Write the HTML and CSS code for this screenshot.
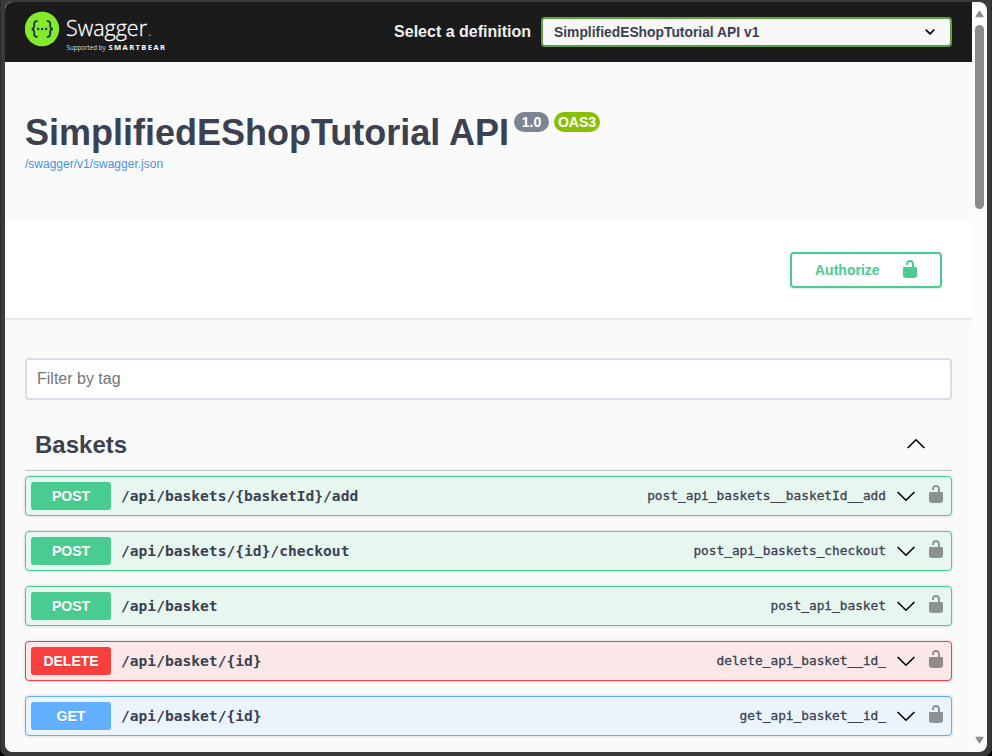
FILE: index.html
```html
<!DOCTYPE html>
<html lang="en">
<head>
<meta charset="utf-8">
<title>Swagger UI</title>
<link rel="stylesheet" href="styles.css">
</head>
<body>
<svg class="defs" width="0" height="0">
  <symbol id="unlocked" viewBox="0 0 20 20"><path d="M15.8 8H14V5.6C14 2.703 12.665 1 10 1 7.334 1 6 2.703 6 5.6V6h2v-.801C8 3.754 8.797 3 10 3c1.203 0 2 .754 2 2.199V8H4c-.553 0-1 .646-1 1.199V17c0 .549.428 1.139.951 1.307l1.197.387C5.672 18.861 6.55 19 7.1 19h5.8c.549 0 1.428-.139 1.951-.307l1.196-.387c.524-.167.953-.757.953-1.306V9.199C17 8.646 16.352 8 15.8 8z"/></symbol>
  <symbol id="chevron" viewBox="0 0 20 20"><path d="M1.6 6 10 14.2 18.400 6" fill="none" stroke="#000" stroke-width="1.6"/></symbol>
</svg>
<div class="frame">
<div class="window">
<main class="page">
  <header class="topbar">
    <svg class="logo" width="150" height="50" viewBox="0 0 150 50">
      <circle cx="17" cy="22" r="17.2" fill="#85ea2d"/>
      <g fill="none" stroke="#173647" stroke-width="1.8">
        <path d="M12.6 14.2h-.9c-1.9 0-2.5 1-2.5 2.700v2c0 2-.7 2.900-2.500 3.100 1.800.2 2.500 1.100 2.500 3.100v2c0 1.700.6 2.700 2.500 2.700h.9M21.800 14.200h.9c1.900 0 2.500 1 2.500 2.700v2c0 2 .7 2.900 2.500 3.100-1.800.2-2.500 1.100-2.500 3.100v2c0 1.700-.6 2.700-2.500 2.700h-.9"/>
      </g>
      <g fill="#173647"><circle cx="13.200" cy="22" r="1.200"/><circle cx="17.200" cy="22" r="1.200"/><circle cx="21.200" cy="22" r="1.200"/></g>
      <text class="logo-name" x="41" y="29" textLength="81" lengthAdjust="spacingAndGlyphs">Swagger</text>
      <path d="M123.500 28.300h2.500" stroke="#999" stroke-width="1"/>
      <text class="logo-by" x="41.500" y="43" textLength="39" lengthAdjust="spacingAndGlyphs">Supported by</text>
      <text class="logo-brand" x="83.500" y="43" textLength="56.500">SMARTBEAR</text>
    </svg>
    <span class="select-label">Select a definition</span>
    <div class="select"><span>SimplifiedEShopTutorial API v1</span>
      <svg width="10" height="6" viewBox="0 0 10 6"><path d="M.7.700 5 4.800 9.300.700" fill="none" stroke="#000" stroke-width="1.700"/></svg>
    </div>
  </header>
  <section class="info">
    <div class="title-row"><h1>SimplifiedEShopTutorial API</h1><span class="badge version">1.0</span><span class="badge oas">OAS3</span></div>
    <a class="link">/swagger/v1/swagger.json</a>
  </section>
  <section class="schemes">
    <button class="authorize"><span>Authorize</span><svg width="20" height="20"><use href="#unlocked"/></svg></button>
  </section>
  <section class="content">
    <div class="filter">Filter by tag</div>
    <div class="tag"><h2>Baskets</h2><svg class="flip" width="20" height="20"><use href="#chevron"/></svg></div>
    <div class="op post"><span class="method">POST</span><span class="path">/api/baskets/{basketId}/add</span><span class="opid">post_api_baskets__basketId__add</span><svg class="arrow" width="20" height="20"><use href="#chevron"/></svg><svg class="lock" width="20" height="20"><use href="#unlocked"/></svg></div>
    <div class="op post"><span class="method">POST</span><span class="path">/api/baskets/{id}/checkout</span><span class="opid">post_api_baskets_checkout</span><svg class="arrow" width="20" height="20"><use href="#chevron"/></svg><svg class="lock" width="20" height="20"><use href="#unlocked"/></svg></div>
    <div class="op post"><span class="method">POST</span><span class="path">/api/basket</span><span class="opid">post_api_basket</span><svg class="arrow" width="20" height="20"><use href="#chevron"/></svg><svg class="lock" width="20" height="20"><use href="#unlocked"/></svg></div>
    <div class="op delete"><span class="method">DELETE</span><span class="path">/api/basket/{id}</span><span class="opid">delete_api_basket__id_</span><svg class="arrow" width="20" height="20"><use href="#chevron"/></svg><svg class="lock" width="20" height="20"><use href="#unlocked"/></svg></div>
    <div class="op get"><span class="method">GET</span><span class="path">/api/basket/{id}</span><span class="opid">get_api_basket__id_</span><svg class="arrow" width="20" height="20"><use href="#chevron"/></svg><svg class="lock" width="20" height="20"><use href="#unlocked"/></svg></div>
  </section>
</main>
<aside class="scrollbar">
  <svg width="9" height="8" viewBox="0 0 9 8"><path d="M4.500.800 8.200 6.800H.8z" fill="#8b8b8b" stroke="#8b8b8b" stroke-linejoin="round"/></svg>
  <div class="thumb"></div>
  <svg class="down" width="9" height="8" viewBox="0 0 9 8"><path d="M4.500 7.200 8.200 1.200H.8z" fill="#8b8b8b" stroke="#8b8b8b" stroke-linejoin="round"/></svg>
</aside>
</div>
</div>
</body>
</html>
```

FILE: styles.css
```css
* { box-sizing: border-box; }
body { margin: 0; background: #000; font-family: "Liberation Sans", Arial, sans-serif; color: #3b4151; overflow: hidden; }
.defs { display: block; }
.frame { width: 992px; height: 756px; padding: 2px 5px 4px; background: #3a3a3a; border-radius: 0 0 8px 8px; box-shadow: inset 1px 0 #2b2b2b, inset -1px 0 #2b2b2b; }
.window { display: flex; width: 982px; height: 750px; border-radius: 8px; overflow: hidden; background: #fcfcfc; }
.page { width: 967px; background: #fafafa; overflow: hidden; }
.topbar { height: 60px; padding: 0 20px; display: flex; align-items: center; background: #1b1b1b; }
.logo { flex: none; }
.logo-name { font: 300 22.5px "Open Sans", sans-serif; fill: #fff; stroke: #fff; stroke-width: .3px; }
.logo-by { font: 6.3px "Open Sans", sans-serif; fill: #ddd; }
.logo-brand { font: 700 7.6px "Open Sans", sans-serif; fill: #fff; }
.select-label { margin-left: auto; margin-right: 10px; font-size: 16px; font-weight: 700; color: #f0f0f0; white-space: nowrap; }
.select { width: 411px; height: 30px; border: 2px solid #62a03f; border-radius: 4px; background: #f7f7f7; padding: 0 15px 0 11px; display: flex; align-items: center; justify-content: space-between; font-size: 13.85px; font-weight: 700; }
.info { height: 160px; padding: 49px 20px 0; }
.title-row { display: flex; align-items: flex-start; height: 45px; }
h1 { margin: 0; font-size: 36px; line-height: 44px; font-weight: 700; white-space: nowrap; }
.badge { height: 20px; margin: 1px 0 0 5px; border-radius: 20px; color: #fff; font-size: 14px; line-height: 20px; font-weight: 700; text-align: center; }
.version { width: 35px; background: #7d8492; }
.oas { width: 46px; background: #89bf04; }
.link { display: block; font-size: 12px; line-height: 16px; color: #4990e2; }
.schemes { height: 96px; padding: 30px 30px 0; background: #fff; box-shadow: 0 1px 2px rgba(0,0,0,.15); display: flex; justify-content: flex-end; align-items: flex-start; }
.authorize { width: 152px; height: 36px; border: 2px solid #49cc90; border-radius: 4px; background: transparent; color: #49cc90; font: 700 14px "Liberation Sans", sans-serif; padding: 0 20px 0 23px; display: flex; align-items: center; justify-content: space-between; box-shadow: 0 1px 2px rgba(0,0,0,.1); }
.authorize svg { fill: #49cc90; margin-top: -2px; }
.content { padding: 40px 20px 0; }
.filter { height: 42px; border: 2px solid #d8dde7; border-radius: 4px; background: #fff; padding: 0 10px; font-size: 16px; line-height: 37px; color: #757575; }
.tag { height: 53px; margin: 18px 0 5px; border-bottom: 1px solid #bebfc3; padding: 0 26px 0 10px; display: flex; align-items: center; justify-content: space-between; }
h2 { margin: 0; padding-top: 2px; font-size: 24px; line-height: 28px; }
.flip { transform: rotate(180deg); }
.op { height: 40px; margin-bottom: 15px; border: 1px solid; border-radius: 4px; box-shadow: 0 0 3px rgba(0,0,0,.19); padding: 0 5px; display: flex; align-items: center; }
.method { width: 80px; height: 28px; border-radius: 3px; color: #fff; text-align: center; font-size: 14px; line-height: 28px; font-weight: 700; text-shadow: 0 1px 0 rgba(0,0,0,.1); }
.post { border-color: #49cc90; background: #e8f6f0; }
.post .method { background: #49cc90; }
.delete { border-color: #f93e3e; background: #fae7e7; }
.delete .method { background: #f93e3e; }
.get { border-color: #61affe; background: #ebf3fb; }
.get .method { background: #61affe; }
.path { margin-left: 10px; padding-bottom: 2px; font: 700 14.6px "DejaVu Sans Mono", monospace; }
.opid { margin-left: auto; padding-bottom: 2px; font: 12.8px "DejaVu Sans Mono", monospace; -webkit-text-stroke: .3px #3b4151; }
.arrow { margin-left: 10px; }
.lock { margin: -4px 0 0 10px; opacity: .4; }
.scrollbar { width: 15px; padding: 8px 3px; display: flex; flex-direction: column; align-items: center; }
.thumb { width: 9px; height: 184px; margin-top: 7px; border-radius: 5px; background: #8b8b8b; }
.down { margin-top: auto; }
```
